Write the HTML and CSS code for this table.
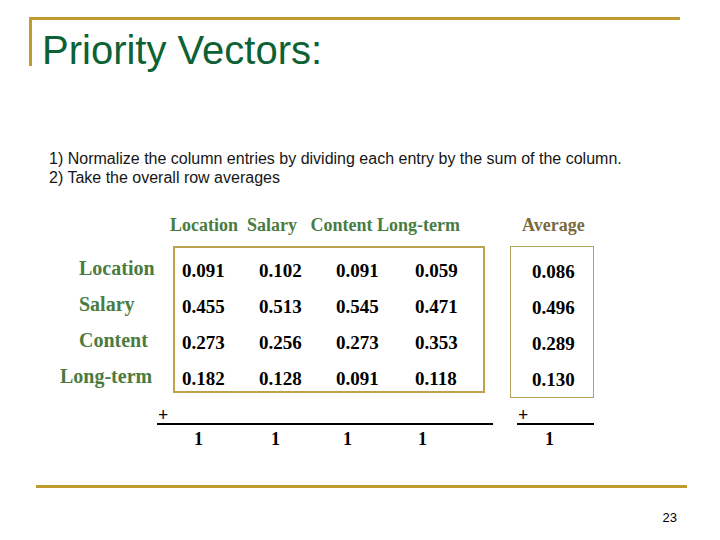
FILE: index.html
```html
<!DOCTYPE html>
<html>
<head>
<meta charset="utf-8">
<link rel="stylesheet" href="styles.css">
</head>
<body>
<div class="slide">
  <div class="frame">
    <h1 class="title">Priority Vectors:</h1>
  </div>
  <div class="steps">
    <div>1) Normalize the column entries by dividing each entry by the sum of the column.</div>
    <div>2) Take the overall row averages</div>
  </div>
  <div class="head-row">
    <div class="col-heads">Location  Salary   Content Long-term</div>
    <div class="avg-head">Average</div>
  </div>
  <div class="body-row">
    <div class="labels">
      <div class="label">Location</div>
      <div class="label">Salary</div>
      <div class="label">Content</div>
      <div class="label label-wide">Long-term</div>
    </div>
    <div class="matrix">
      <div>0.091</div><div>0.102</div><div>0.091</div><div>0.059</div>
      <div>0.455</div><div>0.513</div><div>0.545</div><div>0.471</div>
      <div>0.273</div><div>0.256</div><div>0.273</div><div>0.353</div>
      <div>0.182</div><div>0.128</div><div>0.091</div><div>0.118</div>
    </div>
    <div class="avg">
      <div>0.086</div>
      <div>0.496</div>
      <div>0.289</div>
      <div>0.130</div>
    </div>
  </div>
  <div class="sums">
    <div class="sum-main">
      <div class="plus-line">+</div>
      <div class="ones">
        <div>1</div><div>1</div><div>1</div><div>1</div>
      </div>
    </div>
    <div class="sum-avg">
      <div class="plus-line">+</div>
      <div class="ones ones-avg"><div>1</div></div>
    </div>
  </div>
  <div class="footer-line"></div>
  <div class="page-num">23</div>
</div>
</body>
</html>
```
FILE: styles.css
```css
html, body {
  margin: 0;
  padding: 0;
  background: #ffffff;
}
.slide {
  width: 720px;
  height: 540px;
  overflow: hidden;
  font-family: "Liberation Serif", "Times New Roman", serif;
}
.frame {
  margin: 17px 0 0 29px;
  width: 648px;
  height: 46px;
  border-top: 3px solid #c09b2e;
  border-left: 3px solid #c09b2e;
}
.title {
  margin: 0;
  padding: 8px 0 0 10px;
  font-family: "Liberation Sans", Arial, sans-serif;
  font-weight: normal;
  font-size: 40px;
  line-height: 44px;
  color: #0d6235;
  white-space: nowrap;
}
.steps {
  margin-top: 83px;
  padding-left: 49px;
  font-family: "Liberation Sans", Arial, sans-serif;
  font-size: 16px;
  line-height: 19px;
  color: #161616;
}
.head-row {
  display: flex;
  margin-top: 28px;
  font-weight: bold;
  font-size: 18px;
  line-height: 20px;
}
.col-heads {
  padding-left: 170px;
  width: 352px;
  white-space: pre;
  color: #4a7c3f;
}
.avg-head {
  color: #7b6a3e;
}
.body-row {
  display: flex;
  align-items: flex-start;
  margin-top: 11px;
  font-weight: bold;
}
.labels {
  width: 173px;
  padding-top: 12px;
  box-sizing: border-box;
  display: flex;
  flex-direction: column;
  gap: 16px;
  font-size: 20px;
  line-height: 20px;
  color: #4a7c3f;
}
.label {
  padding-left: 79px;
}
.label-wide {
  padding-left: 60px;
}
.matrix {
  width: 312px;
  height: 147px;
  box-sizing: border-box;
  border: 2px solid #bda24e;
  padding: 13px 0 0 7px;
  display: grid;
  grid-template-columns: 77px 77px 79px auto;
  grid-auto-rows: 20px;
  row-gap: 16px;
  align-content: start;
  font-size: 19px;
  line-height: 20px;
  color: #000000;
}
.avg {
  margin-left: 25px;
  width: 84px;
  height: 152px;
  box-sizing: border-box;
  border: 1px solid #b5a25e;
  padding: 15px 0 0 21px;
  display: flex;
  flex-direction: column;
  gap: 16px;
  font-size: 19px;
  line-height: 20px;
  color: #000000;
}
.sums {
  display: flex;
  margin-top: 10px;
  padding-left: 157px;
  font-weight: bold;
  font-size: 18px;
  color: #000000;
}
.sum-main {
  width: 336px;
}
.sum-avg {
  margin-left: 24px;
  width: 77px;
}
.plus-line {
  line-height: 15px;
  padding-left: 1px;
  border-bottom: 2px solid #000000;
}
.ones {
  margin-top: 4px;
  padding-left: 37px;
  display: grid;
  grid-template-columns: 77px 72px 75px auto;
  line-height: 20px;
}
.ones-avg {
  padding-left: 28px;
  grid-template-columns: auto;
}
.footer-line {
  margin: 36px 0 0 36px;
  width: 651px;
  height: 3px;
  background: #c09b2e;
}
.page-num {
  margin-top: 22px;
  padding-right: 43px;
  text-align: right;
  font-family: "Liberation Sans", Arial, sans-serif;
  font-size: 13px;
  line-height: 15px;
  color: #000000;
}
```
